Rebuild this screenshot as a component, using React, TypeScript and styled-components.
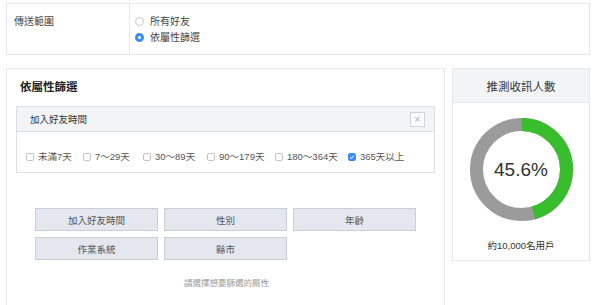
import React from 'react';
import styled, { createGlobalStyle } from 'styled-components';

const GlobalStyle = createGlobalStyle`
  html, body {
    margin: 0;
    padding: 0;
    background: #ffffff;
  }
  body {
    font-family: "Liberation Sans", "Noto Sans CJK TC", sans-serif;
    color: #333333;
  }
`;

const Page = styled.div`
  padding: 3px 10px 0 6px;
  width: 584px;
`;

const RangePanel = styled.div`
  display: flex;
  height: 52px;
  box-sizing: border-box;
  border: 1px solid #e6e7ea;
`;

const RangeLabel = styled.div`
  width: 115px;
  padding: 10px 0 0 7px;
  border-right: 1px solid #e6e7ea;
  font-size: 10px;
  line-height: 16px;
  color: #444;
`;

const RadioList = styled.div`
  display: flex;
  flex-direction: column;
  justify-content: center;
  gap: 3px;
  padding-left: 5px;
`;

const RadioRow = styled.label`
  display: flex;
  align-items: center;
  gap: 6px;
  font-size: 10px;
  line-height: 13px;
  color: #444;
`;

const RadioDot = styled.span<{ $checked?: boolean }>`
  width: 9px;
  height: 9px;
  box-sizing: border-box;
  border-radius: 50%;
  border: ${(p) => (p.$checked ? '3px solid #3a8ef2' : '1px solid #c8c8c8')};
  background: #fff;
`;

const Body = styled.div`
  display: flex;
  gap: 7px;
  margin-top: 13px;
  align-items: flex-start;
`;

const FilterPanel = styled.div`
  width: 439px;
  height: 237px;
  box-sizing: border-box;
  border: 1px solid #e6e7ea;
  border-bottom: none;
  padding: 9px 9px 0;
`;

const FilterTitle = styled.div`
  font-size: 11.5px;
  font-weight: bold;
  line-height: 18px;
  color: #222;
  padding-left: 4px;
  margin-bottom: 10px;
`;

const AttrBox = styled.div`
  border: 1px solid #dcdee2;
`;

const AttrHeader = styled.div`
  display: flex;
  align-items: center;
  justify-content: space-between;
  height: 24px;
  padding: 0 9px 0 13px;
  background: #f3f4f6;
  border-bottom: 1px solid #dcdee2;
  font-size: 9.5px;
  color: #333;
`;

const CloseBox = styled.span`
  width: 15px;
  height: 15px;
  box-sizing: border-box;
  border: 1px solid #d2d4d8;
  background: #fafafa;
  color: #b5b5b5;
  font-size: 11px;
  line-height: 12px;
  text-align: center;
`;

const CheckRow = styled.div`
  display: flex;
  padding: 19px 9px 9px;
`;

const CheckItem = styled.label<{ $w: number }>`
  display: flex;
  align-items: center;
  gap: 4px;
  width: ${(p) => p.$w}px;
  font-size: 9.5px;
  line-height: 12px;
  color: #555;
  white-space: nowrap;
`;

const CheckBox = styled.span<{ $checked?: boolean }>`
  width: 8px;
  height: 8px;
  box-sizing: border-box;
  border-radius: 2px;
  border: 1px solid ${(p) => (p.$checked ? '#3a8ef2' : '#c4c4c4')};
  background: ${(p) => (p.$checked ? '#3a8ef2' : '#fff')};
  display: flex;
  align-items: center;
  justify-content: center;
`;

const ButtonGrid = styled.div`
  display: grid;
  grid-template-columns: repeat(3, 123px);
  gap: 6px;
  justify-content: center;
  margin-top: 35px;
`;

const AttrButton = styled.button`
  height: 23px;
  border: 1px solid #c9ced6;
  background: #e4e7ee;
  color: #555;
  font-family: inherit;
  font-size: 9.5px;
  padding: 0;
`;

const Hint = styled.div`
  text-align: center;
  margin-top: 16px;
  font-size: 8.5px;
  color: #999;
  padding-left: 2px;
`;

const EstimatePanel = styled.div`
  width: 138px;
  height: 193px;
  box-sizing: border-box;
  border: 1px solid #e6e7ea;
`;

const EstimateHeader = styled.div`
  height: 33px;
  background: #f3f4f6;
  border-bottom: 1px solid #e6e7ea;
  display: flex;
  align-items: center;
  justify-content: center;
  font-size: 11.5px;
  color: #333;
`;

const DonutWrap = styled.div`
  position: relative;
  width: 103px;
  height: 103px;
  margin: 15px auto 0;
`;

const DonutLabel = styled.div`
  position: absolute;
  inset: 0;
  display: flex;
  align-items: center;
  justify-content: center;
  font-size: 19px;
  color: #333;
`;

const Reach = styled.div`
  text-align: center;
  margin-top: 17px;
  font-size: 9.5px;
  color: #333;
`;

const ranges = [
  { label: '未滿7天', w: 57 },
  { label: '7～29天', w: 60 },
  { label: '30～89天', w: 64 },
  { label: '90～179天', w: 68 },
  { label: '180～364天', w: 73 },
  { label: '365天以上', w: 70, checked: true },
];

const attrs = ['加入好友時間', '性別', '年齡', '作業系統', '縣市'];

const Donut: React.FC<{ value: number }> = ({ value }) => {
  const r = 45;
  const c = 2 * Math.PI * r;
  return (
    <DonutWrap>
      <svg width="103" height="103" viewBox="0 0 103 103">
        <circle cx="51.5" cy="51.5" r={r} fill="none" stroke="#9b9b9b" strokeWidth="13" />
        <circle
          cx="51.5"
          cy="51.5"
          r={r}
          fill="none"
          stroke="#38bd2c"
          strokeWidth="13"
          strokeDasharray={`${c * value} ${c}`}
          transform="rotate(-90 51.5 51.5)"
        />
      </svg>
      <DonutLabel>{(value * 100).toFixed(1)}%</DonutLabel>
    </DonutWrap>
  );
};

const App: React.FC = () => {
  return (
    <>
      <GlobalStyle />
      <Page>
        <RangePanel>
          <RangeLabel>傳送範圍</RangeLabel>
          <RadioList>
            <RadioRow>
              <RadioDot />
              所有好友
            </RadioRow>
            <RadioRow>
              <RadioDot $checked />
              依屬性篩選
            </RadioRow>
          </RadioList>
        </RangePanel>

        <Body>
          <FilterPanel>
            <FilterTitle>依屬性篩選</FilterTitle>
            <AttrBox>
              <AttrHeader>
                加入好友時間
                <CloseBox>×</CloseBox>
              </AttrHeader>
              <CheckRow>
                {ranges.map((r) => (
                  <CheckItem key={r.label} $w={r.w}>
                    <CheckBox $checked={r.checked}>
                      {r.checked && (
                        <svg width="6" height="6" viewBox="0 0 6 6">
                          <path d="M1 3.2 L2.4 4.5 L5 1.5" fill="none" stroke="#fff" strokeWidth="1" />
                        </svg>
                      )}
                    </CheckBox>
                    {r.label}
                  </CheckItem>
                ))}
              </CheckRow>
            </AttrBox>
            <ButtonGrid>
              {attrs.map((a) => (
                <AttrButton key={a}>{a}</AttrButton>
              ))}
            </ButtonGrid>
            <Hint>請選擇想要篩選的屬性</Hint>
          </FilterPanel>

          <EstimatePanel>
            <EstimateHeader>推測收訊人數</EstimateHeader>
            <Donut value={0.456} />
            <Reach>約10,000名用戶</Reach>
          </EstimatePanel>
        </Body>
      </Page>
    </>
  );
};

export default App;
